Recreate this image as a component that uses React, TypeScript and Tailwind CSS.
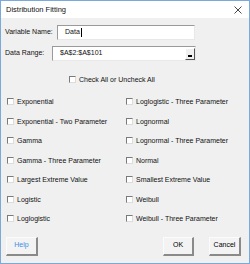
import React from "react";

const Check = () => (
  <span className="inline-block w-[7px] h-[7px] bg-white border-t border-l border-t-[#7a7a7a] border-l-[#7a7a7a] border-b border-r border-b-[#dcdcdc] border-r-[#dcdcdc] shrink-0" />
);

const Item = ({ label }: { label: string }) => (
  <div className="flex items-center h-[19.5px]">
    <Check />
    <span className="ml-[3px] leading-none">{label}</span>
  </div>
);

const Btn = ({ label, blue, w }: { label: string; blue?: boolean; w: string }) => (
  <div
    className={`${w} h-[19px] flex items-center justify-center bg-[#f3f3f3] border-t border-l border-t-[#fbfbfb] border-l-[#fbfbfb] border-r-2 border-b-2 border-r-[#8a8a8a] border-b-[#8a8a8a] ${blue ? "text-[#3b8ee6]" : "text-black"}`}
  >
    {label}
  </div>
);

export default function App() {
  const left = [
    "Exponential",
    "Exponential - Two Parameter",
    "Gamma",
    "Gamma - Three Parameter",
    "Largest Extreme Value",
    "Logistic",
    "Loglogistic",
  ];
  const right = [
    "Loglogistic - Three Parameter",
    "Lognormal",
    "Lognormal - Three Parameter",
    "Normal",
    "Smallest Extreme Value",
    "Weibull",
    "Weibull - Three Parameter",
  ];
  return (
    <div
      className="w-[250px] h-[264px] border border-[#7aa9dc] bg-[#f0f0f0] flex flex-col text-[7px] text-[#111]"
      style={{ fontFamily: '"Liberation Sans", Arial, sans-serif' }}
    >
      <div className="h-[17px] bg-white flex items-center justify-between pl-[5px] pr-[6px] shrink-0">
        <span className="text-[7.5px] mt-[1px]">Distribution Fitting</span>
        <svg width="8" height="8" viewBox="0 0 8 8" className="mr-[1px]">
          <path d="M0.5 0.5 L7.5 7.5 M7.5 0.5 L0.5 7.5" stroke="#333" strokeWidth="0.9" />
        </svg>
      </div>
      <div className="flex flex-col pl-[4px] pr-[4px]">
        <div className="flex items-center mt-[7px] h-[15px]">
          <span className="w-[52px]">Variable Name:</span>
          <div className="w-[138px] h-[15px] bg-white border-t border-l border-t-[#9a9a9a] border-l-[#9a9a9a] border-b border-r border-b-[#e8e8e8] border-r-[#e8e8e8] flex items-center pl-[7px]">
            <span>Data</span>
            <span className="w-px h-[9px] bg-black ml-px" />
          </div>
        </div>
        <div className="flex items-center mt-[6px] h-[15px]">
          <span className="w-[47px]">Data Range:</span>
          <div className="w-[144px] h-[15px] bg-white border-t border-l border-t-[#9a9a9a] border-l-[#9a9a9a] border-b border-r border-b-[#e8e8e8] border-r-[#e8e8e8] flex items-center justify-between pl-[7px]">
            <span>$A$2:$A$101</span>
            <div className="w-[10px] h-[12px] bg-[#f0f0f0] border-r border-b border-r-[#555] border-b-[#555] border-t border-l border-t-white border-l-white flex items-end justify-center pb-[2px] mt-[1px]">
              <span className="w-[4px] h-[2px] bg-black" />
            </div>
          </div>
        </div>
        <div className="flex items-center h-[11px] mt-[13px] pl-[64px]">
          <Check />
          <span className="ml-[3px] leading-none">Check All or Uncheck All</span>
        </div>
        <div className="grid grid-cols-[119px_1fr] mt-[7px] pl-[2px]">
          <div className="flex flex-col">
            {left.map((l) => (
              <Item key={l} label={l} />
            ))}
          </div>
          <div className="flex flex-col">
            {right.map((l) => (
              <Item key={l} label={l} />
            ))}
          </div>
        </div>
        <div className="flex items-center mt-[8px] pl-px">
          <Btn label="Help" blue w="w-[32px]" />
          <div className="ml-auto flex gap-[15px] mr-[4px]">
            <Btn label="OK" w="w-[31px]" />
            <Btn label="Cancel" w="w-[32px]" />
          </div>
        </div>
      </div>
    </div>
  );
}
